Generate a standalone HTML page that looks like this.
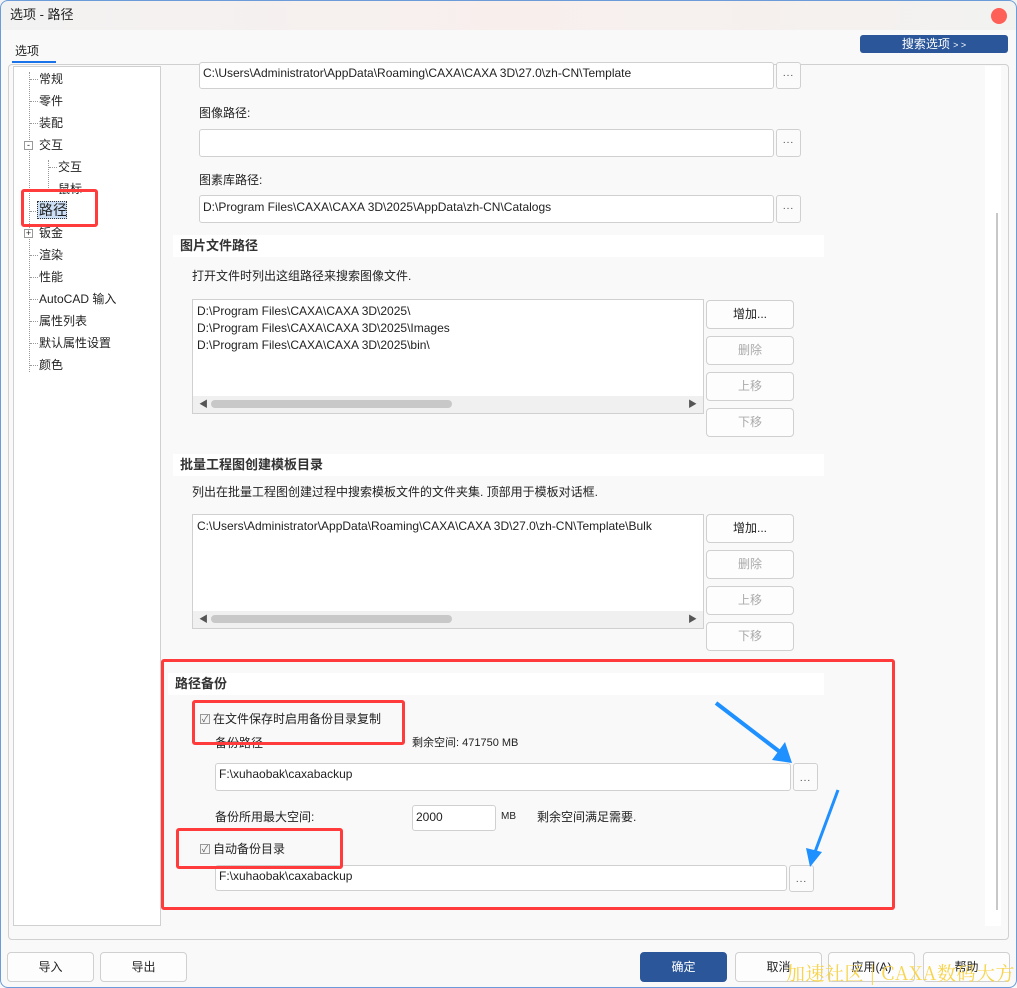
<!DOCTYPE html>
<html><head><meta charset="utf-8">
<style>
*{box-sizing:border-box;margin:0;padding:0}
body{width:1017px;height:988px;overflow:hidden;background:#f9f9f9;font-family:"Liberation Sans","Noto Sans CJK SC",sans-serif;font-size:12px;color:#222;position:relative}
.a{position:absolute}
.t{position:absolute;white-space:nowrap;line-height:14px}
.tb{position:absolute;background:#fff;border:1px solid #d0d0d0;border-radius:3px}
.dots{position:absolute;background:#fbfbfb;border:1px solid #d0d0d0;border-radius:3px;text-align:center;font-size:10px;line-height:22px;letter-spacing:1px;color:#444}
.btn{position:absolute;background:#fdfdfd;border:1px solid #d0d0d0;border-radius:4px;text-align:center;font-size:12px;line-height:26px;color:#222}
.dis{color:#aaa}
.hdr{position:absolute;background:#fff;font-weight:bold;font-size:13px;line-height:22px;padding-left:7px;color:#333}
.list{position:absolute;background:#fff;border:1px solid #d0d0d0}
.sb{position:absolute;left:0;right:0;bottom:0;height:17px;background:#f0f0f0}
.red{position:absolute;border:3px solid #ff3b3b;border-radius:3px}
.cb{position:absolute;width:10px;height:10px;border:1px solid #999;background:#f4f4f4;font-size:9px;line-height:8px;text-align:center;color:#555}
.h{position:absolute;width:8px;border-top:1px dotted #999}
</style></head><body>
<div class="a" style="left:0;top:0;width:1017px;height:30px;background:linear-gradient(90deg,#f2f2f2,#f8efed 50%,#f2f2f0)"></div>
<div class="t" style="left:10px;top:8px;font-size:13px">选项 - 路径</div>
<div class="a" style="left:991px;top:8px;width:16px;height:16px;border-radius:50%;background:#fe5f57"></div>
<div class="a" style="left:0;top:0;width:1017px;height:988px;border:1px solid #6b9bd8;border-radius:8px;pointer-events:none"></div>
<div class="t" style="left:15px;top:44px;font-size:12px">选项</div>
<div class="a" style="left:12px;top:61px;width:44px;height:2px;background:#1a73e8"></div>
<div class="a" style="left:860px;top:35px;width:148px;height:18px;background:#2b579a;border-radius:3px;color:#fff;text-align:center;line-height:18px;font-size:12px">搜索选项 <span style="font-size:9px">&gt; &gt;</span></div>
<div class="a" style="left:8px;top:64px;width:1001px;height:876px;border:1px solid #d0d0d0;border-radius:4px"></div>
<div class="a" style="left:13px;top:66px;width:148px;height:860px;background:#fff;border:1px solid #d0d0d0"></div>
<div class="a" style="left:29px;top:72px;height:300px;border-left:1px dotted #999"></div>
<div class="a" style="left:48px;top:160px;height:30px;border-left:1px dotted #999"></div>
<div class="h" style="left:30px;top:79px"></div><div class="h" style="left:30px;top:101px"></div><div class="h" style="left:30px;top:123px"></div>
<div class="h" style="left:49px;top:167px"></div><div class="h" style="left:49px;top:189px"></div>
<div class="h" style="left:30px;top:211px"></div><div class="h" style="left:30px;top:255px"></div><div class="h" style="left:30px;top:277px"></div><div class="h" style="left:30px;top:299px"></div><div class="h" style="left:30px;top:321px"></div><div class="h" style="left:30px;top:343px"></div><div class="h" style="left:30px;top:365px"></div>
<div class="t" style="left:39px;top:72px">常规</div>
<div class="t" style="left:39px;top:94px">零件</div>
<div class="t" style="left:39px;top:116px">装配</div>
<div class="a" style="left:24px;top:141px;width:9px;height:9px;border:1px solid #999;background:#fff;font-size:9px;line-height:6px;text-align:center">-</div>
<div class="t" style="left:39px;top:138px">交互</div>
<div class="t" style="left:58px;top:160px">交互</div>
<div class="t" style="left:58px;top:182px">鼠标</div>
<div class="a" style="left:37px;top:201px;width:30px;height:18px;background:#cde0f5;border:1px dotted #333"></div>
<div class="t" style="left:39px;top:203px;font-size:14px">路径</div>
<div class="a" style="left:24px;top:229px;width:9px;height:9px;border:1px solid #999;background:#fff;font-size:9px;line-height:7px;text-align:center">+</div>
<div class="t" style="left:39px;top:226px">钣金</div>
<div class="t" style="left:39px;top:248px">渲染</div>
<div class="t" style="left:39px;top:270px">性能</div>
<div class="t" style="left:39px;top:292px">AutoCAD 输入</div>
<div class="t" style="left:39px;top:314px">属性列表</div>
<div class="t" style="left:39px;top:336px">默认属性设置</div>
<div class="t" style="left:39px;top:358px">颜色</div>
<div class="red" style="left:21px;top:189px;width:77px;height:38px"></div>
<div class="a" style="left:985px;top:66px;width:16px;height:860px;background:#fff"></div>
<div class="a" style="left:996px;top:213px;width:2px;height:697px;background:#c8c8c8"></div>
<div class="tb" style="left:199px;top:62px;width:575px;height:27px"></div>
<div class="t" style="left:203px;top:66px">C:\Users\Administrator\AppData\Roaming\CAXA\CAXA 3D\27.0\zh-CN\Template</div>
<div class="dots" style="left:776px;top:62px;width:25px;height:27px">...</div>
<div class="t" style="left:199px;top:106px">图像路径:</div>
<div class="tb" style="left:199px;top:129px;width:575px;height:28px"></div>
<div class="dots" style="left:776px;top:129px;width:25px;height:28px">...</div>
<div class="t" style="left:199px;top:173px">图素库路径:</div>
<div class="tb" style="left:199px;top:195px;width:575px;height:28px"></div>
<div class="t" style="left:203px;top:200px">D:\Program Files\CAXA\CAXA 3D\2025\AppData\zh-CN\Catalogs</div>
<div class="dots" style="left:776px;top:195px;width:25px;height:28px">...</div>
<div class="hdr" style="left:173px;top:235px;width:651px">图片文件路径</div>
<div class="t" style="left:192px;top:269px">打开文件时列出这组路径来搜索图像文件.</div>
<div class="list" style="left:192px;top:299px;width:512px;height:115px">
<div class="t" style="left:4px;top:4px">D:\Program Files\CAXA\CAXA 3D\2025\</div>
<div class="t" style="left:4px;top:21px">D:\Program Files\CAXA\CAXA 3D\2025\Images</div>
<div class="t" style="left:4px;top:38px">D:\Program Files\CAXA\CAXA 3D\2025\bin\</div>
<div class="sb"><div class="a" style="left:18px;top:4px;width:241px;height:8px;background:#c8c8c8;border-radius:4px"></div><div class="t" style="left:6px;top:1px;font-size:9px;color:#555">◀</div><div class="t" style="right:6px;top:1px;font-size:9px;color:#555">▶</div></div>
</div>
<div class="btn" style="left:706px;top:300px;width:88px;height:29px">增加...</div>
<div class="btn dis" style="left:706px;top:336px;width:88px;height:29px">删除</div>
<div class="btn dis" style="left:706px;top:372px;width:88px;height:29px">上移</div>
<div class="btn dis" style="left:706px;top:408px;width:88px;height:29px">下移</div>
<div class="hdr" style="left:173px;top:454px;width:651px">批量工程图创建模板目录</div>
<div class="t" style="left:192px;top:485px">列出在批量工程图创建过程中搜索模板文件的文件夹集. 顶部用于模板对话框.</div>
<div class="list" style="left:192px;top:514px;width:512px;height:115px;overflow:hidden">
<div class="t" style="left:4px;top:4px">C:\Users\Administrator\AppData\Roaming\CAXA\CAXA 3D\27.0\zh-CN\Template\Bulk</div>
<div class="sb"><div class="a" style="left:18px;top:4px;width:241px;height:8px;background:#c8c8c8;border-radius:4px"></div><div class="t" style="left:6px;top:1px;font-size:9px;color:#555">◀</div><div class="t" style="right:6px;top:1px;font-size:9px;color:#555">▶</div></div>
</div>
<div class="btn" style="left:706px;top:514px;width:88px;height:29px">增加...</div>
<div class="btn dis" style="left:706px;top:550px;width:88px;height:29px">删除</div>
<div class="btn dis" style="left:706px;top:586px;width:88px;height:29px">上移</div>
<div class="btn dis" style="left:706px;top:622px;width:88px;height:29px">下移</div>
<div class="hdr" style="left:168px;top:673px;width:656px">路径备份</div>
<div class="cb" style="left:200px;top:714px">✓</div>
<div class="t" style="left:213px;top:712px">在文件保存时启用备份目录复制</div>
<div class="t" style="left:215px;top:736px">备份路径</div>
<div class="t" style="left:412px;top:736px;font-size:11px">剩余空间: 471750 MB</div>
<div class="tb" style="left:215px;top:763px;width:576px;height:28px"></div>
<div class="t" style="left:219px;top:767px">F:\xuhaobak\caxabackup</div>
<div class="dots" style="left:793px;top:763px;width:25px;height:28px;line-height:30px">...</div>
<div class="t" style="left:215px;top:810px">备份所用最大空间:</div>
<div class="tb" style="left:412px;top:805px;width:84px;height:26px"></div>
<div class="t" style="left:416px;top:810px">2000</div>
<div class="t" style="left:501px;top:810px;font-size:10px">MB</div>
<div class="t" style="left:537px;top:810px">剩余空间满足需要.</div>
<div class="cb" style="left:200px;top:844px">✓</div>
<div class="t" style="left:213px;top:842px">自动备份目录</div>
<div class="tb" style="left:215px;top:865px;width:572px;height:26px"></div>
<div class="t" style="left:219px;top:869px">F:\xuhaobak\caxabackup</div>
<div class="dots" style="left:789px;top:865px;width:25px;height:27px;line-height:28px">...</div>
<div class="red" style="left:161px;top:659px;width:734px;height:251px"></div>
<div class="red" style="left:192px;top:700px;width:213px;height:45px"></div>
<div class="red" style="left:176px;top:828px;width:167px;height:41px"></div>
<svg class="a" style="left:0;top:0" width="1017" height="988">
<line x1="716" y1="703" x2="780" y2="752" stroke="#1e90ff" stroke-width="4"/>
<polygon points="772,760 792,763 785,742" fill="#1e90ff"/>
<line x1="838" y1="790" x2="815" y2="852" stroke="#1e90ff" stroke-width="3"/>
<polygon points="806,848 810,867 822,852" fill="#1e90ff"/>
</svg>
<div class="btn" style="left:7px;top:952px;width:87px;height:30px;line-height:28px">导入</div>
<div class="btn" style="left:100px;top:952px;width:87px;height:30px;line-height:28px">导出</div>
<div class="btn" style="left:640px;top:952px;width:87px;height:30px;line-height:28px;background:#2b579a;color:#fff;border-color:#2b579a">确定</div>
<div class="btn" style="left:735px;top:952px;width:87px;height:30px;line-height:28px">取消</div>
<div class="btn" style="left:828px;top:952px;width:87px;height:30px;line-height:28px">应用(A)</div>
<div class="btn" style="left:923px;top:952px;width:87px;height:30px;line-height:28px">帮助</div>
<div class="t" style="left:786px;top:962px;font-size:19px;line-height:21px;letter-spacing:0.5px;color:#f7d44a;font-family:'Noto Serif CJK SC',serif">加速社区 | CAXA数码大方</div>
</body></html>
